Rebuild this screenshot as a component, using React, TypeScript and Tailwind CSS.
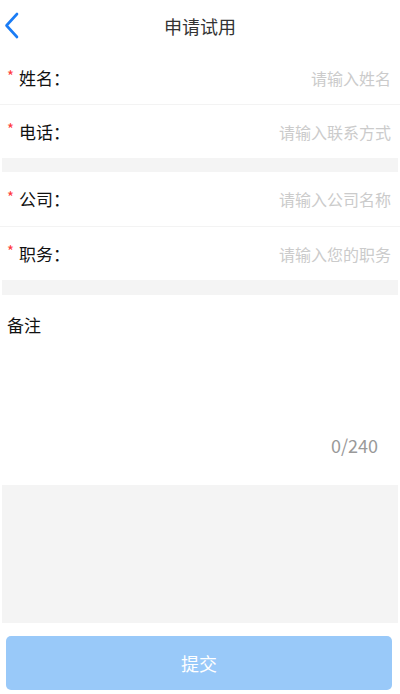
import React from "react";

const font = { fontFamily: '"Noto Sans CJK SC", "Noto Sans", sans-serif' };

function Field({ label, placeholder, h, last }: { label: string; placeholder: string; h: string; last?: boolean }) {
  return (
    <div className={"flex shrink-0 items-center justify-between bg-white pl-[7px] pr-[9px] " + h + (last ? "" : " border-b border-[#f3f3f3]")}>
      <div className="flex items-center">
        <span className="relative -top-[3px] mr-[5px] text-[15px] leading-none text-[#ff3b3b]">*</span>
        <span className="text-[17px] text-[#111]">{label}：</span>
      </div>
      <input
        className="w-[200px] bg-transparent text-right text-[16px] text-[#333] placeholder:text-[#cbcbcb] focus:outline-none"
        placeholder={placeholder}
        style={font}
      />
    </div>
  );
}

export default function App() {
  return (
    <div className="flex h-[694px] w-[400px] flex-col bg-white" style={font}>
      {/* header */}
      <div className="relative flex h-[52px] shrink-0 items-center justify-center">
        <button className="absolute left-[4px] top-[12px]">
          <svg width="16" height="27" viewBox="0 0 16 27" fill="none">
            <path d="M13 2 L2.5 13.5 L13 25" stroke="#1a7cf5" strokeWidth="2.6" strokeLinecap="round" strokeLinejoin="round" />
          </svg>
        </button>
        <h1 className="text-[18px] text-[#333]">申请试用</h1>
      </div>

      <Field label="姓名" placeholder="请输入姓名" h="h-[53px]" />
      <Field label="电话" placeholder="请输入联系方式" h="h-[53px]" last />

      <div className="mx-[2px] h-[14px] shrink-0 bg-[#f4f4f4]" />

      <Field label="公司" placeholder="请输入公司名称" h="h-[55px]" />
      <Field label="职务" placeholder="请输入您的职务" h="h-[53px]" last />

      <div className="mx-[2px] h-[15px] shrink-0 bg-[#f4f4f4]" />

      {/* remarks */}
      <div className="flex h-[190px] shrink-0 flex-col px-[7px] pt-[17px]">
        <span className="text-[17px] text-[#111]">备注</span>
        <textarea className="mt-1 flex-1 resize-none bg-transparent text-[16px] focus:outline-none" style={font} />
        <div className="pb-[26px] pr-[15px] text-right text-[18px] text-[#999]">0/240</div>
      </div>

      <div className="mx-[2px] h-[138px] shrink-0 bg-[#f4f4f4]" />

      <div className="pl-[6px] pr-[8px] pt-[13px]">
        <button className="flex h-[54px] w-full items-center justify-center rounded-[5px] bg-[#99c9f9] text-[18px] text-white">
          提交
        </button>
      </div>
    </div>
  );
}
